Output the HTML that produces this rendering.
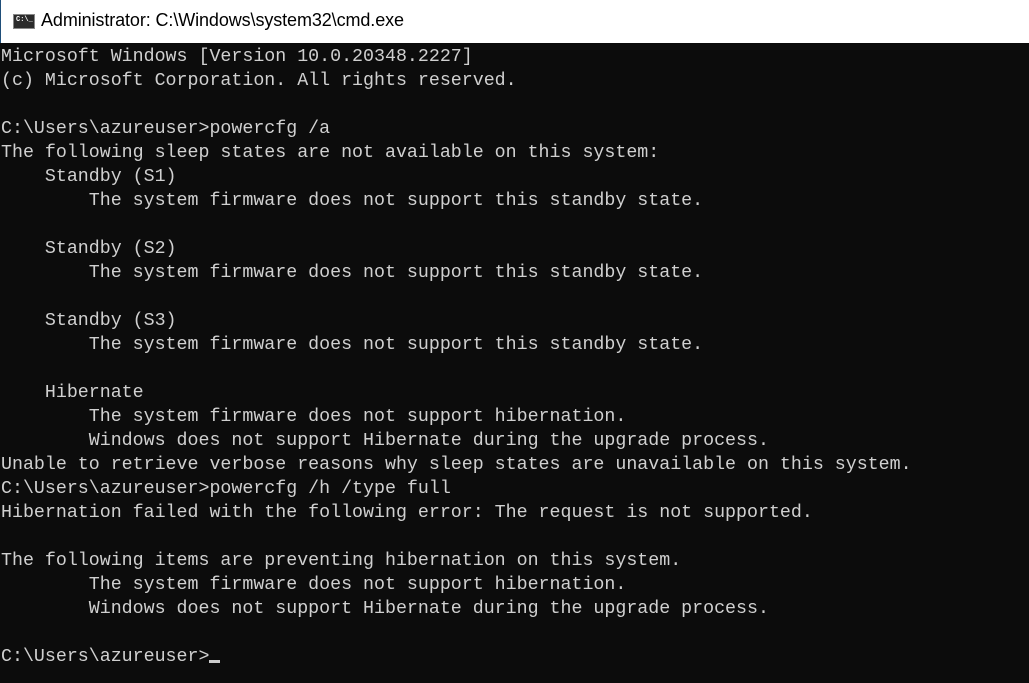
<!DOCTYPE html>
<html><head><meta charset="utf-8"><style>
html,body{margin:0;padding:0;width:1029px;height:683px;overflow:hidden;background:#0c0c0c}
#tb{position:absolute;left:0;top:0;width:1029px;height:43px;background:#fff;border-left:1px solid #1f4e79;box-sizing:border-box}
#tb .t{position:absolute;left:40px;top:10px;font:18px "Liberation Sans",sans-serif;color:#000;letter-spacing:-0.1px}
#ic{position:absolute;left:12px;top:14px;width:22px;height:15px;background:#2b2b2b;border:1px solid #888;box-sizing:border-box}
#ic span{position:absolute;left:2px;top:1px;font:bold 7px "Liberation Mono",monospace;color:#fff}
pre{position:absolute;left:1px;top:45px;margin:0;font:18.3px/24px "Liberation Mono",monospace;color:#d0d0d0;letter-spacing:0}
.cur{display:inline-block;width:11px;height:3px;background:#ccc;vertical-align:-2px}
</style></head><body>
<div id="tb"><div id="ic"><span>C:\_</span></div><div class="t">Administrator: C:\Windows\system32\cmd.exe</div></div>
<pre>Microsoft Windows [Version 10.0.20348.2227]
(c) Microsoft Corporation. All rights reserved.

C:\Users\azureuser>powercfg /a
The following sleep states are not available on this system:
    Standby (S1)
        The system firmware does not support this standby state.

    Standby (S2)
        The system firmware does not support this standby state.

    Standby (S3)
        The system firmware does not support this standby state.

    Hibernate
        The system firmware does not support hibernation.
        Windows does not support Hibernate during the upgrade process.
Unable to retrieve verbose reasons why sleep states are unavailable on this system.
C:\Users\azureuser>powercfg /h /type full
Hibernation failed with the following error: The request is not supported.

The following items are preventing hibernation on this system.
        The system firmware does not support hibernation.
        Windows does not support Hibernate during the upgrade process.

C:\Users\azureuser><span class="cur"></span></pre>
</body></html>
